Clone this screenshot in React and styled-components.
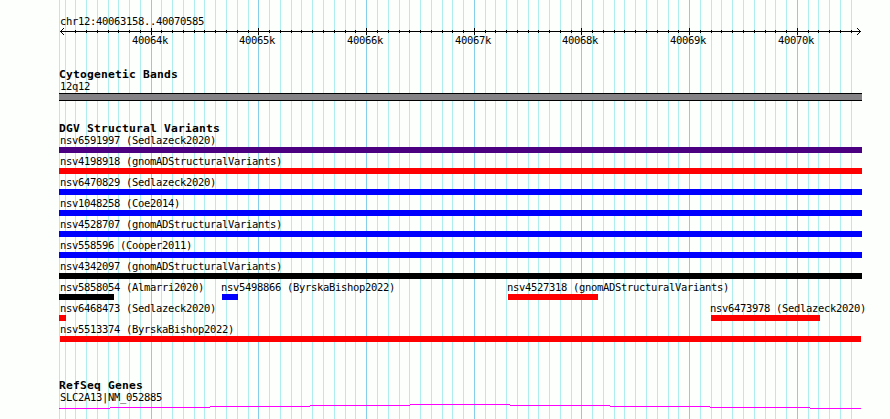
import React from 'react';
import styled, { createGlobalStyle } from 'styled-components';

const GlobalStyle = createGlobalStyle`
  body {
    margin: 0;
    background-color: #fdfffc;
    overflow: hidden;
  }
`;

const Page = styled.div`
  position: relative;
  width: 890px;
  height: 419px;
  overflow: hidden;
  background-color: #fdfffc;
  color: #000000;
  font-family: 'DejaVu Sans Mono', monospace;
`;

const Grid = styled.svg`
  position: absolute;
  top: 0;
  left: 0;
`;

const Content = styled.main`
  position: relative;
  display: flex;
  flex-direction: column;
  padding-left: 59px;
  padding-top: 15px;
`;

const Label = styled.div`
  height: 13px;
  padding-left: ${(props) => props.$indent ?? 1}px;
  font-size: 10.5px;
  line-height: 13px;
  letter-spacing: -0.32px;
  white-space: nowrap;
`;

const Title = styled.h2`
  height: 13px;
  margin: 0;
  font-size: 11.3px;
  line-height: 15px;
  font-weight: 700;
  letter-spacing: 0.2px;
  white-space: nowrap;
`;

const Ruler = styled.section`
  height: 52px;
`;

const Axis = styled.svg`
  display: block;
  width: 803px;
  height: 7px;
`;

const Scale = styled.div`
  display: flex;
  margin-top: -1px;
  padding-left: 73px;
`;

const ScaleLabel = styled(Label)`
  width: ${(props) => props.$width}px;
  padding-left: 0;
`;

const Track = styled.section`
  height: ${(props) => props.$height}px;
`;

const Band = styled.div`
  box-sizing: border-box;
  width: 803px;
  height: 8px;
  background-color: #848284;
  border-top: 1px solid #000000;
  border-bottom: 1px solid #000000;
`;

const Row = styled.div`
  display: flex;
  height: 21px;
`;

const Variant = styled.div`
  flex: none;
  width: ${(props) => props.$width}px;
  margin-left: ${(props) => props.$gap || 0}px;
`;

const VariantLabel = styled(Label)`
  padding-left: 0;
  text-indent: ${(props) => props.$shift ?? 1}px;
`;

const Bar = styled.div`
  height: 6px;
  background-color: ${(props) => props.color};
`;

const Gene = styled.svg`
  display: block;
  width: 803px;
  height: 6px;
`;

const majorLines = [151, 258, 366, 474, 581, 689, 797];

const minorLines = [
  75, 86, 97, 108, 118, 129, 140,
  161, 172, 183, 194, 204, 215, 226, 237, 248,
  269, 280, 291, 301, 312, 323, 334, 345, 355,
  377, 388, 399, 409, 420, 431, 442, 452, 463,
  485, 495, 506, 517, 528, 538, 549, 560, 571,
  592, 603, 614, 624, 635, 646, 657, 668, 678,
  700, 711, 721, 732, 743, 754, 765, 775, 786,
  808, 818, 829, 840, 851,
];

const scaleLabels = [
  { text: '40064k', width: 107 },
  { text: '40065k', width: 108 },
  { text: '40066k', width: 108 },
  { text: '40067k', width: 107 },
  { text: '40068k', width: 108 },
  { text: '40069k', width: 108 },
  { text: '40070k', width: 36 },
];

// gap is the distance from the previous variant in the same row
const rows = [
  [{ name: 'nsv6591997 (Sedlazeck2020)', width: 803, color: '#4b0082' }],
  [{ name: 'nsv4198918 (gnomADStructuralVariants)', width: 803, color: '#ff0000' }],
  [{ name: 'nsv6470829 (Sedlazeck2020)', width: 803, color: '#0000ff' }],
  [{ name: 'nsv1048258 (Coe2014)', width: 803, color: '#0000ff' }],
  [{ name: 'nsv4528707 (gnomADStructuralVariants)', width: 803, color: '#0000ff' }],
  [{ name: 'nsv558596 (Cooper2011)', width: 803, color: '#0000ff' }],
  [{ name: 'nsv4342097 (gnomADStructuralVariants)', width: 803, color: '#000000' }],
  [
    { name: 'nsv5858054 (Almarri2020)', width: 55, color: '#000000' },
    { name: 'nsv5498866 (ByrskaBishop2022)', width: 16, gap: 108, shift: -1, color: '#0000ff' },
    { name: 'nsv4527318 (gnomADStructuralVariants)', width: 90, gap: 270, shift: -1, color: '#ff0000' },
  ],
  [
    { name: 'nsv6468473 (Sedlazeck2020)', width: 7, color: '#ff0000' },
    { name: 'nsv6473978 (Sedlazeck2020)', width: 109, gap: 645, shift: -1, color: '#ff0000' },
  ],
  [{ name: 'nsv5513374 (ByrskaBishop2022)', width: 801, gap: 1, shift: 0, color: '#ff0000' }],
];

const App = () => {
  return (
    <Page>
      <GlobalStyle />
      <Grid width="890" height="419" shapeRendering="crispEdges">
        {[59, 65, ...minorLines].map((x) => (
          <rect key={x} x={x} y="0" width="1" height="419" fill="#afeeee" />
        ))}
        {majorLines.map((x) => (
          <rect key={x} x={x} y="0" width="1" height="419" fill="#87ceeb" />
        ))}
      </Grid>
      <Content>
        <Ruler>
          <Label>chr12:40063158..40070585</Label>
          <Axis viewBox="59 28 803 7" shapeRendering="crispEdges">
            <rect x="60" y="31" width="801" height="1" />
            {minorLines.map((x) => (
              <rect key={x} x={x} y="30" width="1" height="3" />
            ))}
            {majorLines.map((x) => (
              <rect key={x} x={x} y="28" width="1" height="7" />
            ))}
            {[1, 2, 3].map((i) => (
              <React.Fragment key={i}>
                <rect x={60 + i} y={31 - i} width="1" height="1" />
                <rect x={60 + i} y={31 + i} width="1" height="1" />
                <rect x={860 - i} y={31 - i} width="1" height="1" />
                <rect x={860 - i} y={31 + i} width="1" height="1" />
              </React.Fragment>
            ))}
          </Axis>
          <Scale>
            {scaleLabels.map((label) => (
              <ScaleLabel key={label.text} $width={label.width}>{label.text}</ScaleLabel>
            ))}
          </Scale>
        </Ruler>
        <Track $height={54}>
          <Title>Cytogenetic Bands</Title>
          <Label>12q12</Label>
          <Band />
        </Track>
        <Track $height={257}>
          <Title>DGV Structural Variants</Title>
          {rows.map((row) => (
            <Row key={row[0].name}>
              {row.map((item) => (
                <Variant key={item.name} $width={item.width} $gap={item.gap}>
                  <VariantLabel $shift={item.shift}>{item.name}</VariantLabel>
                  <Bar color={item.color} />
                </Variant>
              ))}
            </Row>
          ))}
        </Track>
        <Track $height={41}>
          <Title>RefSeq Genes</Title>
          <Label>SLC2A13|NM_052885</Label>
          <Gene viewBox="59 404 803 6" shapeRendering="crispEdges">
            <path
              d="M59 408.5H110M110 407.5H210M210 406.5H310M310 405.5H410M410 404.5H510M510 405.5H610M610 406.5H710M710 407.5H810M810 408.5H861"
              stroke="#ff00ff"
              fill="none"
            />
          </Gene>
        </Track>
      </Content>
    </Page>
  );
};

export default App;
